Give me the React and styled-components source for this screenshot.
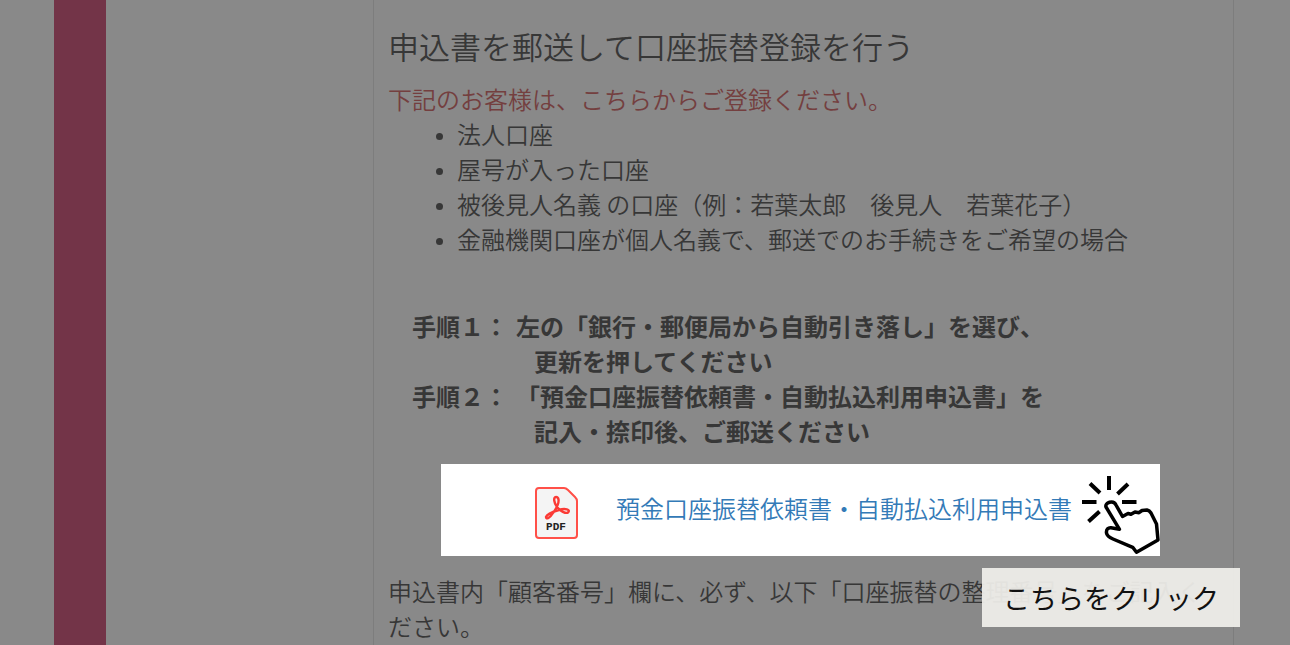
import styled, { createGlobalStyle } from "styled-components";

const GlobalStyle = createGlobalStyle`
    *{
        box-sizing:border-box;
    }
    body{
        margin:0;
        background:#898989;
        color:#373737;
        font-family:"Noto Sans CJK JP", "Liberation Sans", sans-serif;
        font-size:24px;
        font-weight:350;
        line-height:35px;
    }
`

const Page = styled.div`
    display:flex;
    min-height:100vh;
    padding:0 56px 0 54px;
`

const Stripe = styled.div`
    flex:none;
    width:52px;
    background:#733448;
`

const Sidebar = styled.div`
    flex:none;
    width:267px;
`

const Card = styled.main`
    flex:1;
    padding:28px 14px 0;
    border:solid #7d7d7d;
    border-width:0 1px;
`

const Title = styled.h1`
    margin:0 0 18px;
    font-size:31px;
    font-weight:350;
    line-height:35px;
`

const Notice = styled.p`
    margin:0;
    color:#743f3f;
`

const Targets = styled.ul`
    margin:0 0 52px;
    padding-left:69px;

    li::marker{
        font-size:18px;
    }
`

const Steps = styled.dl`
    display:grid;
    grid-template-columns:104px 1fr;
    margin:0 0 16px;
    padding-left:24px;
    font-weight:700;
`

const StepLabel = styled.dt`
    white-space:nowrap;
`

const StepText = styled.dd`
    margin:0;
`

const StepRest = styled.span`
    display:block;
    padding-left:18px;
`

const Download = styled.div`
    position:relative;
    display:flex;
    align-items:flex-start;
    gap:38px;
    height:92px;
    margin:0 59px 17px 53px;
    padding:22px 0 0 94px;
    background:#fff;
`

const DownloadLink = styled.a`
    color:#337ab7;
    line-height:44px;
    text-decoration:none;
    white-space:nowrap;
`

const Hand = styled.svg`
    position:absolute;
    right:0;
    top:11px;
`

const Footnote = styled.div`
    position:relative;
`

const Note = styled.p`
    margin:0;
`

const Hint = styled.div`
    position:absolute;
    top:-5px;
    right:-21px;
    padding:12px 21px;
    background:rgba(240, 239, 235, .93);
    color:#111;
    font-size:27px;
    font-weight:400;
    white-space:nowrap;
`

const targets = [
    "法人口座",
    "屋号が入った口座",
    "被後見人名義 の口座（例：若葉太郎　後見人　若葉花子）",
    "金融機関口座が個人名義で、郵送でのお手続きをご希望の場合",
]

const PdfIcon = () => (
    <svg width="43" height="53" viewBox="0 0 43 53" fill="none" aria-hidden="true">
        <path
            d="M4 2H29Q31 2 33 4L40 11Q42 13 42 15V49Q42 52 39 52H4Q1 52 1 49V5Q1 2 4 2Z"
            fill="#f4f4f4"
            stroke="#ff5048"
            strokeWidth="2"
            strokeLinejoin="round"
        />
        <path
            d="M21 11C18 11 19 17 22 21C25 25 31 28 33 26.500C36 23.500 30 22 24 24C17 26 12 28 11 31C11 34 15 32 18 27C21 23 24 17 23.500 13.500C23.200 11.500 22.500 11 21 11Z"
            stroke="#fb3a35"
            strokeWidth="2.400"
        />
        <text x="21" y="44" textAnchor="middle" fill="#222" fontFamily="Liberation Mono, monospace" fontSize="11" fontWeight="700">
            PDF
        </text>
    </svg>
)

const ClickHand = () => (
    <Hand width="80" height="80" viewBox="0 0 80 80" fill="none" stroke="#000" strokeWidth="4" aria-hidden="true">
        <path d="M29 1V15M10 8.500L20 18M48 9L37.500 19M2 27H16.500M42 27H56.500M19.500 36.500L8.500 46.500" />
        <path
            d="M26 32C24.500 27.500 33.500 24.500 36 30L42.500 41.500L48 38.500L51 39.300L55 37L59 37.700L62 35.500L67 35Q69.500 35.500 71 38L76.500 49L78 65L56.500 77.300L52.700 72.300L33 64Q27 61.500 26.500 58C26 54 28.500 52.500 31 52.800L39.500 54.300Z"
            fill="#fff"
            strokeWidth="3.500"
            strokeLinejoin="round"
        />
    </Hand>
)

export default function App() {
    return (
        <>
            <GlobalStyle />
            <Page>
                <Stripe />
                <Sidebar />
                <Card>
                    <Title>申込書を郵送して口座振替登録を行う</Title>
                    <Notice>下記のお客様は、こちらからご登録ください。</Notice>
                    <Targets>
                        {targets.map(target => <li key={target}>{target}</li>)}
                    </Targets>
                    <Steps>
                        <StepLabel>手順１：</StepLabel>
                        <StepText>
                            左の「銀行・郵便局から自動引き落し」を選び、
                            <StepRest>更新を押してください</StepRest>
                        </StepText>
                        <StepLabel>手順２：</StepLabel>
                        <StepText>
                            「預金口座振替依頼書・自動払込利用申込書」を
                            <StepRest>記入・捺印後、ご郵送ください</StepRest>
                        </StepText>
                    </Steps>
                    <Download>
                        <PdfIcon />
                        <DownloadLink href="#pdf">預金口座振替依頼書・自動払込利用申込書</DownloadLink>
                        <ClickHand />
                    </Download>
                    <Footnote>
                        <Note>
                            申込書内「顧客番号」欄に、必ず、以下「口座振替の整理番号」をご記入く
                            <br />
                            ださい。
                        </Note>
                        <Hint>こちらをクリック</Hint>
                    </Footnote>
                </Card>
            </Page>
        </>
    )
}
